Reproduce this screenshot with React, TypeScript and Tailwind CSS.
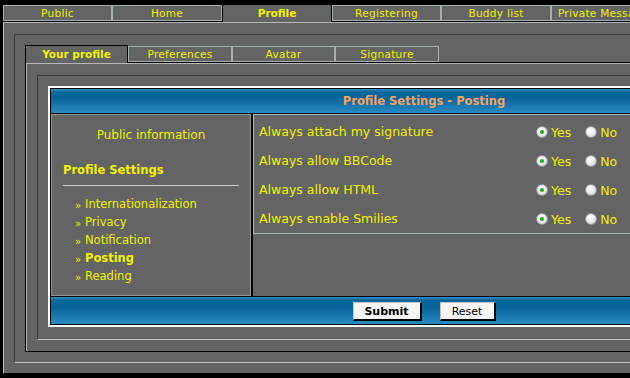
const FONT = "font-['DejaVu_Sans','Verdana',sans-serif]";

const settings = [
  "Always attach my signature",
  "Always allow BBCode",
  "Always allow HTML",
  "Always enable Smilies",
];

const navItems = [
  { label: "Internationalization", active: false },
  { label: "Privacy", active: false },
  { label: "Notification", active: false },
  { label: "Posting", active: true },
  { label: "Reading", active: false },
];

function TopTab({ label, className = "" }: { label: string; className?: string }) {
  return (
    <div
      className={`h-[16px] shrink-0 border border-[#a3afb0] bg-[#646464] text-center text-[10.5px] leading-[14px] tracking-[0.3px] text-[#f2f200] ${className}`}
    >
      {label}
    </div>
  );
}

function SubTab({ label, className = "" }: { label: string; className?: string }) {
  return (
    <div
      className={`h-[16px] shrink-0 border border-[#a3afb0] bg-[#646464] text-center text-[10.5px] leading-[14px] tracking-[0.3px] text-[#f2f200] ${className}`}
    >
      {label}
    </div>
  );
}

function Radio({ checked }: { checked: boolean }) {
  return (
    <span className="mt-[2px] flex h-[12px] w-[12px] shrink-0 items-center justify-center rounded-full border border-[#8b97a2] bg-[radial-gradient(circle_at_40%_35%,#ffffff_0%,#f0f0f0_40%,#c9c9c9_100%)]">
      {checked && <span className="h-[4px] w-[4px] rounded-full bg-[#1faa1f]" />}
    </span>
  );
}

export default function App() {
  return (
    <div className={`h-[378px] w-[630px] overflow-hidden bg-black ${FONT}`}>
      <div className="w-[848px]">
        {/* main navigation tabs */}
        <div className="flex h-[22px] items-start pl-[3px] pt-[5px]">
          <TopTab label="Public" className="w-[109px]" />
          <TopTab label="Home" className="w-[110px]" />
          <div className="ml-px h-[17px] w-[108px] shrink-0 bg-[#646464] text-center text-[10.5px] font-bold leading-[17px] text-[#f2f200]">
            Profile
          </div>
          <TopTab label="Registering" className="ml-px w-[109px]" />
          <TopTab label="Buddy list" className="w-[110px]" />
          <TopTab label="Private Messages" className="w-[110px]" />
        </div>

        {/* outer frame */}
        <div className="ml-[3px] w-[842px] border border-b-black border-l-[#b8b8b8] border-r-black border-t-[#b8b8b8] bg-[#646464] px-[10px] pb-[10px] pt-[11px]">
          <div className="border border-b-[#c4c4c4] border-l-[#3c3c3c] border-r-[#c4c4c4] border-t-[#3c3c3c] p-[10px]">
            {/* profile sub tabs */}
            <div className="flex h-[17px] items-end">
              <div className="relative z-10 -mb-px h-[18px] w-[103px] shrink-0 border border-b-0 border-black bg-[#646464] text-center text-[10.5px] font-bold leading-[17px] text-[#f2f200]">
                Your profile
              </div>
              <SubTab label="Preferences" className="w-[104px]" />
              <SubTab label="Avatar" className="w-[103px]" />
              <SubTab label="Signature" className="w-[104px]" />
            </div>

            <div className="border border-black px-[11px] pb-[11px] pt-[12px] shadow-[inset_1px_1px_0_#b8b8b8]">
              <div className="border border-b-[#c4c4c4] border-l-[#3c3c3c] border-r-[#c4c4c4] border-t-[#3c3c3c] px-[10px] pb-[12px] pt-[10px]">
                {/* form table */}
                <div className="flex flex-col gap-px border-2 border-white bg-black p-px">
                  <div className="h-[24px] bg-[linear-gradient(to_bottom,#3a8ec0_0px,#0a679c_3px,#086599_40%,#2a8bc2_100%)] text-center text-[11.5px] font-bold leading-[24px] text-[#f4a460]">
                    Profile Settings - Posting
                  </div>

                  <div className="flex h-[182px] gap-[2px]">
                    <div className="w-[200px] shrink-0 border border-[#8e9696] bg-[#646464] px-[11px] pt-[11px]">
                      <div className="text-center text-[12px] leading-[18px] text-[#f2f200]">Public information</div>
                      <div className="mt-[17px] text-[11.5px] font-bold leading-[18px] text-[#f2f200]">Profile Settings</div>
                      <div className="mt-[6px] h-px bg-[#c8c8c8]" />
                      <ul className="mt-[10px] pl-[12px]">
                        {navItems.map((item) => (
                          <li
                            key={item.label}
                            className={`flex h-[18px] items-center text-[11.5px] text-[#f2f200] ${item.active ? "font-bold" : ""}`}
                          >
                            <span className="w-[10px] text-[10px] font-normal">»</span>
                            {item.label}
                          </li>
                        ))}
                      </ul>
                    </div>

                    <div className="flex-1 bg-[#646464]">
                      <div className="border border-[#a3b5b5] pb-px pt-px">
                        {settings.map((label) => (
                          <div key={label} className="flex h-[29px] items-center text-[12.5px] text-[#f2f200]">
                            <span className="mt-[3px] w-[282px] shrink-0 pl-[5px]">{label}</span>
                            <Radio checked />
                            <span className="ml-[3px] mt-[6px]">Yes</span>
                            <span className="ml-[14px]">
                              <Radio checked={false} />
                            </span>
                            <span className="ml-[3px] mt-[6px]">No</span>
                          </div>
                        ))}
                      </div>
                    </div>
                  </div>

                  <div className="flex h-[27px] items-start justify-center gap-[18px] bg-[linear-gradient(to_bottom,#3a8ec0_0px,#0a679c_3px,#086599_40%,#2a8bc2_100%)] pt-[5px]">
                    <button className="h-[19px] w-[69px] border-b-2 border-l border-r-2 border-t border-b-black border-l-[#c4c4c4] border-r-black border-t-[#c4c4c4] bg-[#f6f6f6] text-[11px] font-bold leading-[15px] text-black">
                      Submit
                    </button>
                    <button className="h-[19px] w-[56px] border-b-2 border-l border-r-2 border-t border-b-black border-l-[#c4c4c4] border-r-black border-t-[#c4c4c4] bg-[#f6f6f6] text-[11px] leading-[15px] text-black">
                      Reset
                    </button>
                  </div>
                </div>
              </div>
            </div>
          </div>
        </div>
      </div>
    </div>
  );
}
